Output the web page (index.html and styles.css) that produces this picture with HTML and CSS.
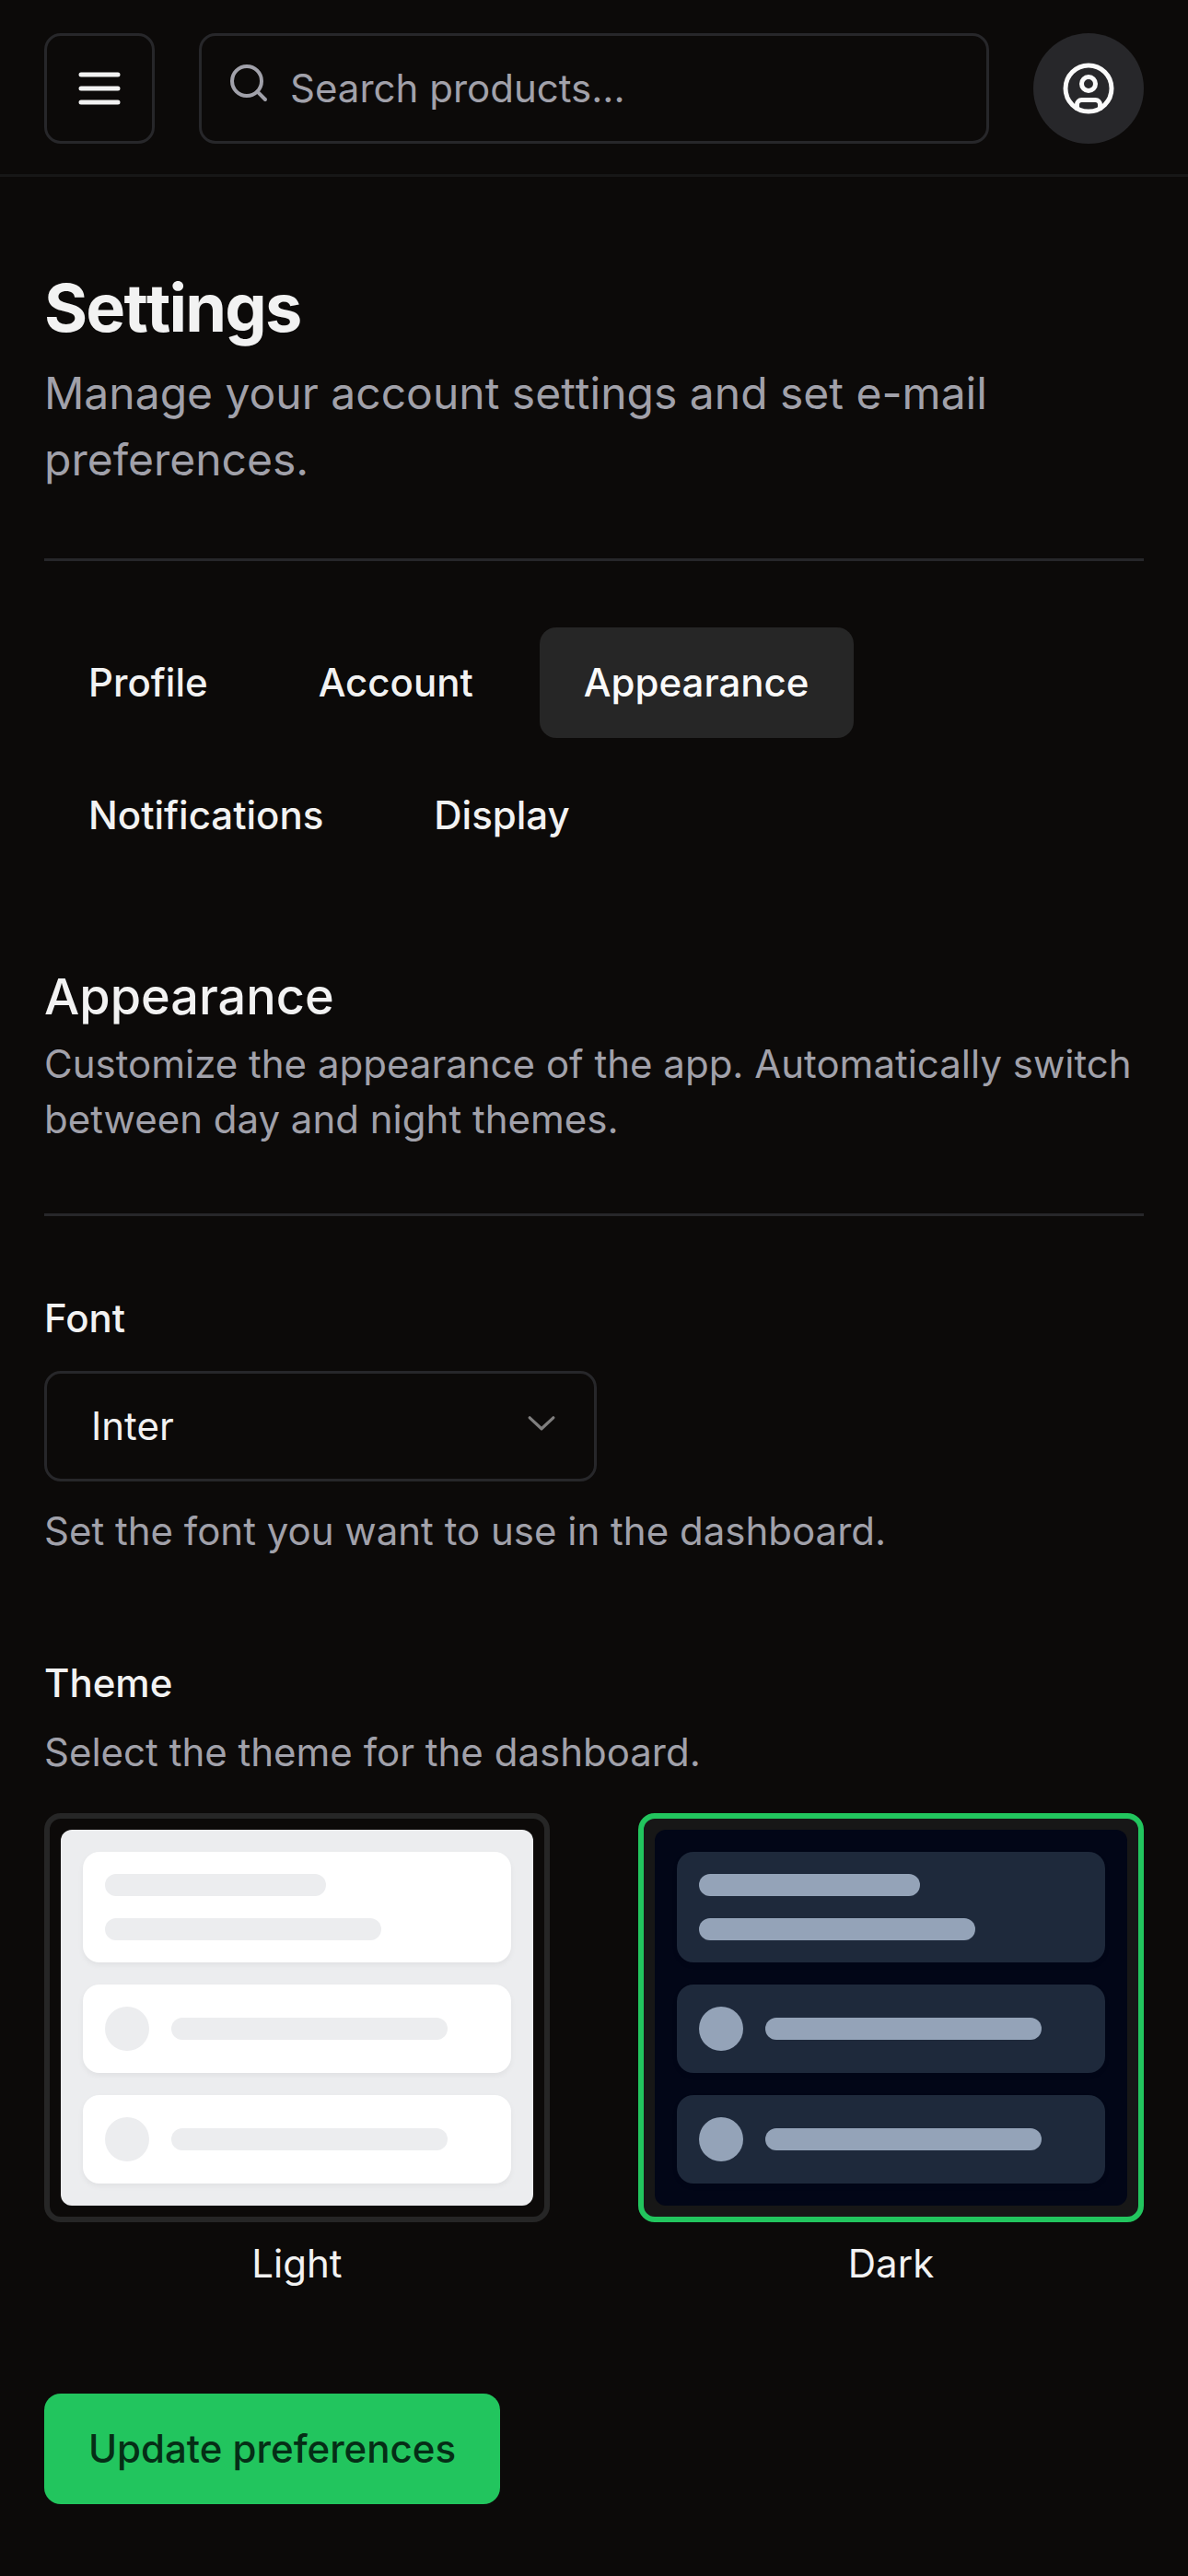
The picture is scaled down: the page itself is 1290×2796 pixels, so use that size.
FILE: index.html
```html
<!DOCTYPE html>
<html lang="en">
<head>
<meta charset="utf-8">
<title>Settings</title>
<link rel="stylesheet" href="styles.css">
</head>
<body>
<header class="topbar">
  <button class="menu" aria-label="Menu"><svg width="60" height="60" viewBox="0 0 24 24"><path d="M4 6h16M4 12h16M4 18h16"/></svg></button>
  <div class="search"><svg width="48" height="48" viewBox="0 0 24 24"><circle cx="11" cy="11" r="8"/><path d="m21 21-4.3-4.3"/></svg><span>Search products...</span></div>
  <button class="avatar" aria-label="Account"><svg width="60" height="60" viewBox="0 0 24 24"><circle cx="12" cy="12" r="10"/><circle cx="12" cy="10" r="3"/><path d="M7 20.662V19a2 2 0 0 1 2-2h6a2 2 0 0 1 2 2v1.662"/></svg></button>
</header>
<main>
  <h1 class="unkerned">Settings</h1>
  <p class="lead">Manage your account <span class="unkerned">settings</span> and set e-mail preferences.</p>
  <hr class="first">
  <nav class="tabs"><a>Profile</a><a>Account</a><a class="active">Appearance</a><a>Notifications</a><a>Display</a></nav>
  <h2>Appearance</h2>
  <p class="muted">Customize the appearance of the app. Automatically switch between day and night themes.</p>
  <hr class="second">
  <section class="font-field">
    <h3>Font</h3>
    <div class="select"><span>Inter</span><svg width="48" height="48" viewBox="0 0 15 15"><path d="M3.135 6.158a.5.5 0 0 1 .707-.023L7.5 9.565l3.658-3.43a.5.5 0 0 1 .684.73l-4 3.75a.5.5 0 0 1-.684 0l-4-3.75a.5.5 0 0 1-.023-.707Z"/></svg></div>
    <p class="muted">Set the font you want to use in the dashboard.</p>
  </section>
  <section class="theme-field">
    <h3>Theme</h3>
    <p class="muted">Select the theme for the dashboard.</p>
    <div class="themes">
      <div class="option light"><div class="frame"><div class="preview">
        <div class="tile lines"><i class="short"></i><i></i></div><div class="tile"><b></b><i></i></div><div class="tile"><b></b><i></i></div>
      </div></div><span>Light</span></div>
      <div class="option dark"><div class="frame"><div class="preview">
        <div class="tile lines"><i class="short"></i><i></i></div><div class="tile"><b></b><i></i></div><div class="tile"><b></b><i></i></div>
      </div></div><span>Dark</span></div>
    </div>
  </section>
  <button class="update">Update preferences</button>
</main>
</body>
</html>
```
FILE: styles.css
```css
* { box-sizing: border-box; margin: 0; padding: 0; }
body { background: #0c0a09; color: #f2f2f2; font: 42px/60px Inter, sans-serif; min-height: 2796px; }
svg { fill: none; stroke: currentColor; stroke-width: 2; stroke-linecap: round; stroke-linejoin: round; flex: none; }
button { font: inherit; color: inherit; border: 0; background: none; }
.topbar { height: 192px; display: flex; align-items: flex-start; gap: 48px; padding: 36px 48px 0; border-bottom: 3px solid #171717; }
.menu { width: 120px; height: 120px; display: flex; align-items: center; justify-content: center; border: 3px solid #27272a; border-radius: 18px; }
.search { flex: 1; height: 120px; display: flex; align-items: center; gap: 21px; padding: 0 27px; border: 3px solid #27272a; border-radius: 18px; color: #a1a1aa; }
.search svg { margin-top: -12px; }
.avatar { width: 120px; height: 120px; display: flex; align-items: center; justify-content: center; border-radius: 50%; background: #27272a; color: #fafafa; }
main { padding: 96px 48px 0; }
h1 { font-size: 72px; line-height: 92px; font-weight: 700; letter-spacing: -1.8px; margin-bottom: 11px; }
.unkerned { font-kerning: none; }
.lead { font-size: 48px; line-height: 72px; color: #a1a1aa; }
hr { border: 0; height: 3px; background: #27272a; }
.first { margin: 71px 0 72px; }
.second { margin: 72px 0 90px; }
.tabs { display: flex; flex-wrap: wrap; gap: 24px; margin-bottom: 96px; }
.tabs a { height: 120px; padding: 30px 48px; border-radius: 18px; font-weight: 500; }
.tabs .active { background: #262626; color: #fafafa; }
h2 { font-size: 54px; line-height: 82px; font-weight: 500; margin-bottom: 2px; }
h3 { font-size: 42px; line-height: 42px; font-weight: 500; }
.muted { color: #a1a1aa; }
.select { width: 600px; height: 120px; margin: 36px 0 24px; padding: 0 33px 0 48px; display: flex; align-items: center; justify-content: space-between; border: 3px solid #27272a; border-radius: 18px; }
.select svg { fill: currentColor; stroke: none; opacity: .5; margin-top: -12px; }
.theme-field { margin-top: 114px; }
.theme-field h3 { margin-bottom: 24px; }
.themes { display: grid; grid-template-columns: 1fr 1fr; gap: 96px; margin-top: 36px; }
.frame { border: 6px solid #262626; border-radius: 18px; padding: 12px; }
.dark .frame { border-color: #22c55e; background: #171717; }
.preview { display: flex; flex-direction: column; gap: 24px; padding: 24px; border-radius: 12px; background: #ecedef; }
.dark .preview { background: #020617; }
.tile { height: 96px; display: flex; align-items: center; gap: 24px; padding: 24px; border-radius: 18px; background: #fff; box-shadow: 0 3px 6px #0000000d; }
.lines { height: 120px; flex-direction: column; align-items: flex-start; }
.dark .tile { background: #1e293b; }
.tile i { width: 300px; height: 24px; border-radius: 12px; background: #ecedef; }
.tile .short { width: 240px; }
.tile b { width: 48px; height: 48px; border-radius: 50%; background: #ecedef; }
.dark .tile i, .dark .tile b { background: #94a3b8; }
.option span { display: block; text-align: center; padding-top: 15px; }
.update { height: 120px; padding: 0 48px; margin-top: 111px; border-radius: 18px; background: #22c55e; color: #052e16; font-weight: 500; }
```
